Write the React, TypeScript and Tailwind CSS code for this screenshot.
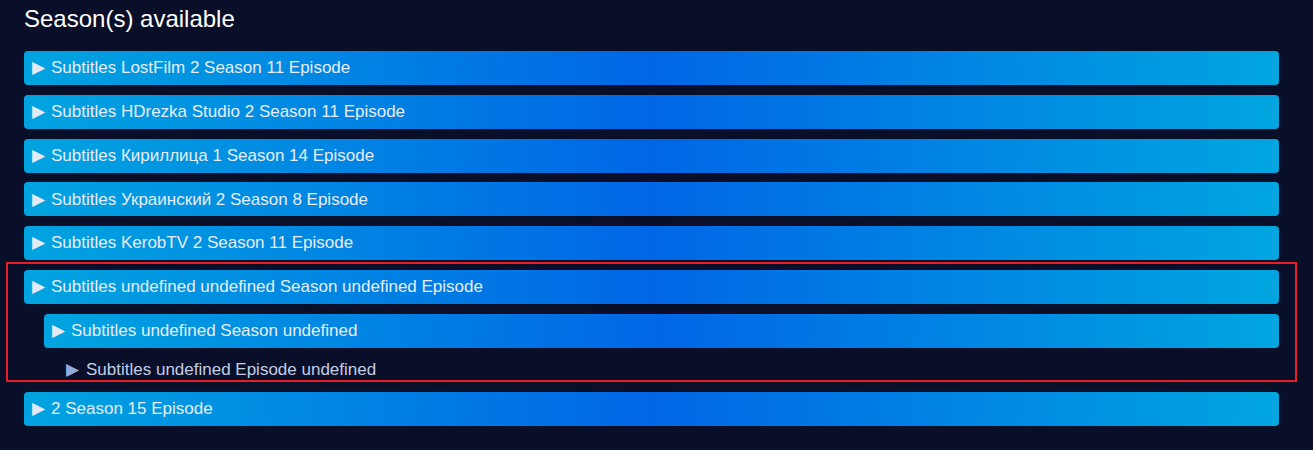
import React from "react";

const grad = "bg-[linear-gradient(90deg,#00a4e0_0%,#0066e6_50%,#00a6e0_100%)]";

function Bar({ text, indent = false }: { text: string; indent?: boolean }) {
  return (
    <div className={`${grad} ${indent ? "ml-[20px]" : ""} h-[34px] rounded-[4px] flex items-center pl-[8px] text-[17px] text-[#e8ecf4]`}>
      <span className="inline-block w-[19px] text-[17px] text-[#e4e9f2]">▶</span>
      <span>{text}</span>
    </div>
  );
}

export default function App() {
  return (
    <div className="min-h-[450px] bg-[#090f29] pl-[24px] pr-[34px] pt-[5px]" style={{ fontFamily: '"Liberation Sans", Arial, sans-serif' }}>
      <h2 className="text-[24px] leading-[28px] text-white mb-[18px]">Season(s) available</h2>
      <div className="flex flex-col gap-[9.75px]">
        <Bar text="Subtitles LostFilm 2 Season 11 Episode" />
        <Bar text="Subtitles HDrezka Studio 2 Season 11 Episode" />
        <Bar text="Subtitles Кириллица 1 Season 14 Episode" />
        <Bar text="Subtitles Украинский 2 Season 8 Episode" />
        <Bar text="Subtitles KerobTV 2 Season 11 Episode" />
        <div className="-mx-[18px] -mt-[7.75px] mb-[0.25px] border-2 border-[#ec1c24] px-[16px] pt-[6px] pb-0 flex flex-col gap-[10px]">
          <Bar text="Subtitles undefined undefined Season undefined Episode" />
          <Bar indent text="Subtitles undefined Season undefined" />
          <div className="ml-[42px] mt-[2px] h-[20px] flex items-center text-[17px] text-[#c4cde6]">
            <span className="inline-block w-[20px] text-[17px] text-[#93aadc]">▶</span>
            <span>Subtitles undefined Episode undefined</span>
          </div>
        </div>
        <Bar text="2 Season 15 Episode" />
      </div>
    </div>
  );
}
